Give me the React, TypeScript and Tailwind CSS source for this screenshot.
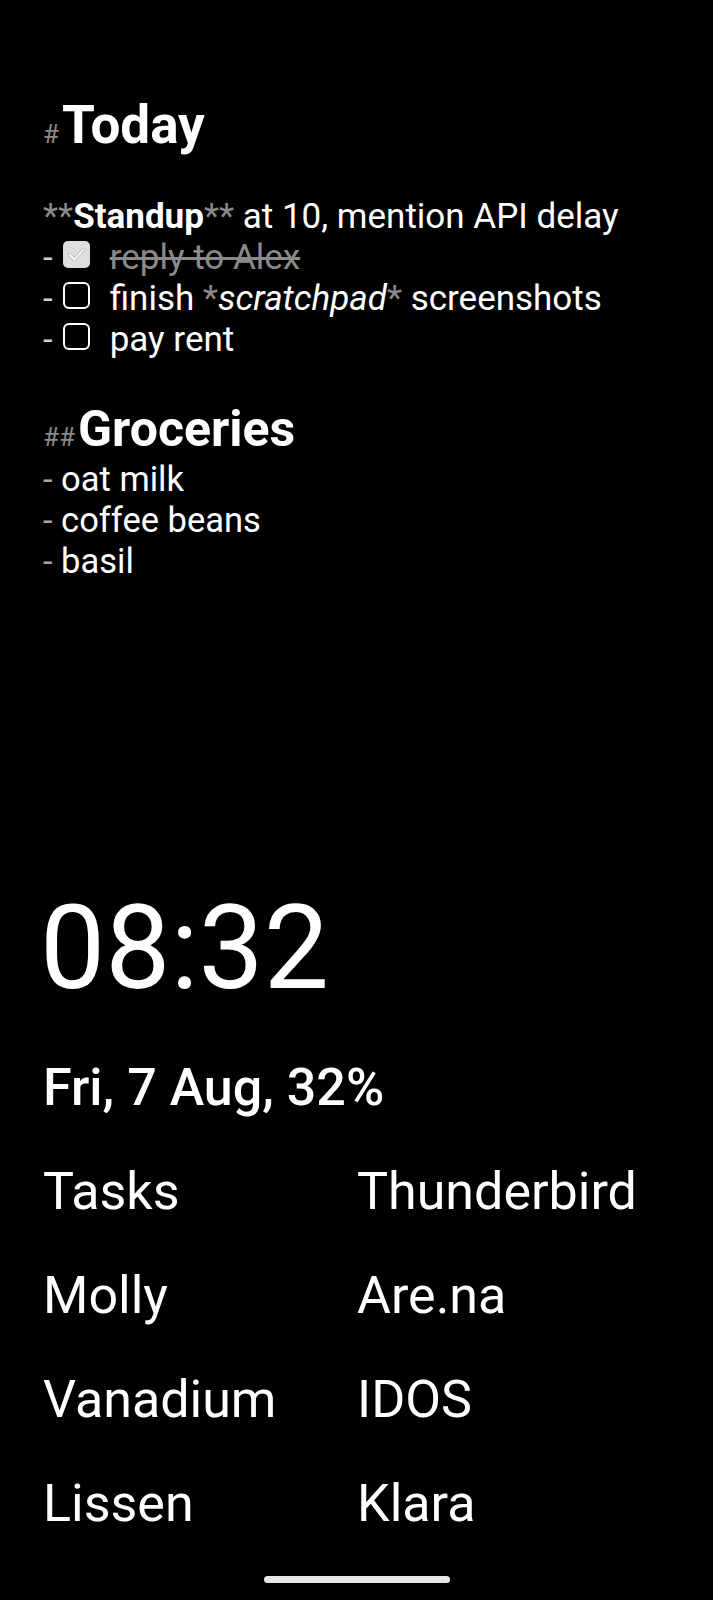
import React from "react";

const Mark = ({ children }: { children: React.ReactNode }) => (
  <span className="text-[#8a8a8a]">{children}</span>
);

const CheckedBox = () => (
  <svg width="27" height="27" viewBox="0 0 27 27" className="shrink-0">
    <rect x="0" y="0" width="27" height="27" rx="5" fill="#dedede" />
    <path d="M6.5 13.5 L11.5 18.5 L20.5 8.5" fill="none" stroke="#bdbdbd" strokeWidth="3.4" strokeLinecap="round" strokeLinejoin="round" />
    <path d="M6.5 13.5 L11.5 18.5 L20.5 8.5" fill="none" stroke="#fafafa" strokeWidth="1.8" strokeLinecap="round" strokeLinejoin="round" />
  </svg>
);

const EmptyBox = () => (
  <div className="w-[27px] h-[27px] shrink-0 rounded-[6px] border-2 border-white" />
);

const TaskLine = ({ checked, children }: { checked?: boolean; children: React.ReactNode }) => (
  <div className="flex items-start h-[41px] leading-[41px]">
    <span className="text-[#d0d0d0]">-</span>
    <div className="ml-[10px] mt-[4px]">{checked ? <CheckedBox /> : <EmptyBox />}</div>
    <span className="ml-[20px] whitespace-nowrap">{children}</span>
  </div>
);

const ListLine = ({ children }: { children: React.ReactNode }) => (
  <div className="h-[41px] leading-[41px] whitespace-nowrap">
    <span className="text-[#a8a8a8]">- </span>
    {children}
  </div>
);

const apps = ["Tasks", "Thunderbird", "Molly", "Are.na", "Vanadium", "IDOS", "Lissen", "Klara"];

export default function App() {
  return (
    <div
      className="h-[1600px] w-full bg-black text-white flex flex-col overflow-hidden"
      style={{ fontFamily: 'Roboto, "Noto Sans", sans-serif' }}
    >
      <div className="pt-[95px] pl-[43px] text-[35px]">
        <div className="h-[60px] leading-[60px] whitespace-nowrap">
          <span className="text-[26px] text-[#8a8a8a]">#</span>
          <span className="ml-[3px] text-[53px] font-bold">Today</span>
        </div>
        <div className="h-[41px]" />
        <div className="h-[41px] leading-[41px] whitespace-nowrap">
          <Mark>**</Mark>
          <span className="font-bold">Standup</span>
          <Mark>**</Mark> at 10, mention API delay
        </div>
        <TaskLine checked>
          <span className="text-[#8a8a8a] line-through decoration-[#8a8a8a]">reply to Alex</span>
        </TaskLine>
        <TaskLine>
          finish <Mark>*</Mark>
          <span className="italic">scratchpad</span>
          <Mark>*</Mark> screenshots
        </TaskLine>
        <TaskLine>pay rent</TaskLine>
        <div className="h-[39px]" />
        <div className="h-[60px] leading-[60px] whitespace-nowrap">
          <span className="text-[26px] text-[#8a8a8a]">##</span>
          <span className="ml-[3px] text-[50px] font-bold">Groceries</span>
        </div>
        <div className="text-[34.5px]">
          <ListLine>oat milk</ListLine>
          <ListLine>coffee beans</ListLine>
          <ListLine>basil</ListLine>
        </div>
      </div>

      <div className="mt-auto pl-[43px] pb-[17px] flex flex-col">
        <div className="-ml-[3px] text-[116px] leading-[116px] h-[116px] whitespace-nowrap">08:32</div>
        <div className="mt-[56px] text-[52px] leading-[52px] h-[52px] font-medium whitespace-nowrap">
          Fri, 7 Aug, 32%
        </div>
        <div className="mt-[26px] grid grid-cols-[314px_1fr]">
          {apps.map((a) => (
            <div key={a} className="h-[104px] leading-[104px] text-[52px] whitespace-nowrap">
              {a}
            </div>
          ))}
        </div>
        <div className="mt-[20px] -ml-[43px] flex justify-center">
          <div className="w-[186px] h-[7px] rounded-full bg-[#e6e6e6] ml-[1px]" />
        </div>
      </div>
    </div>
  );
}
